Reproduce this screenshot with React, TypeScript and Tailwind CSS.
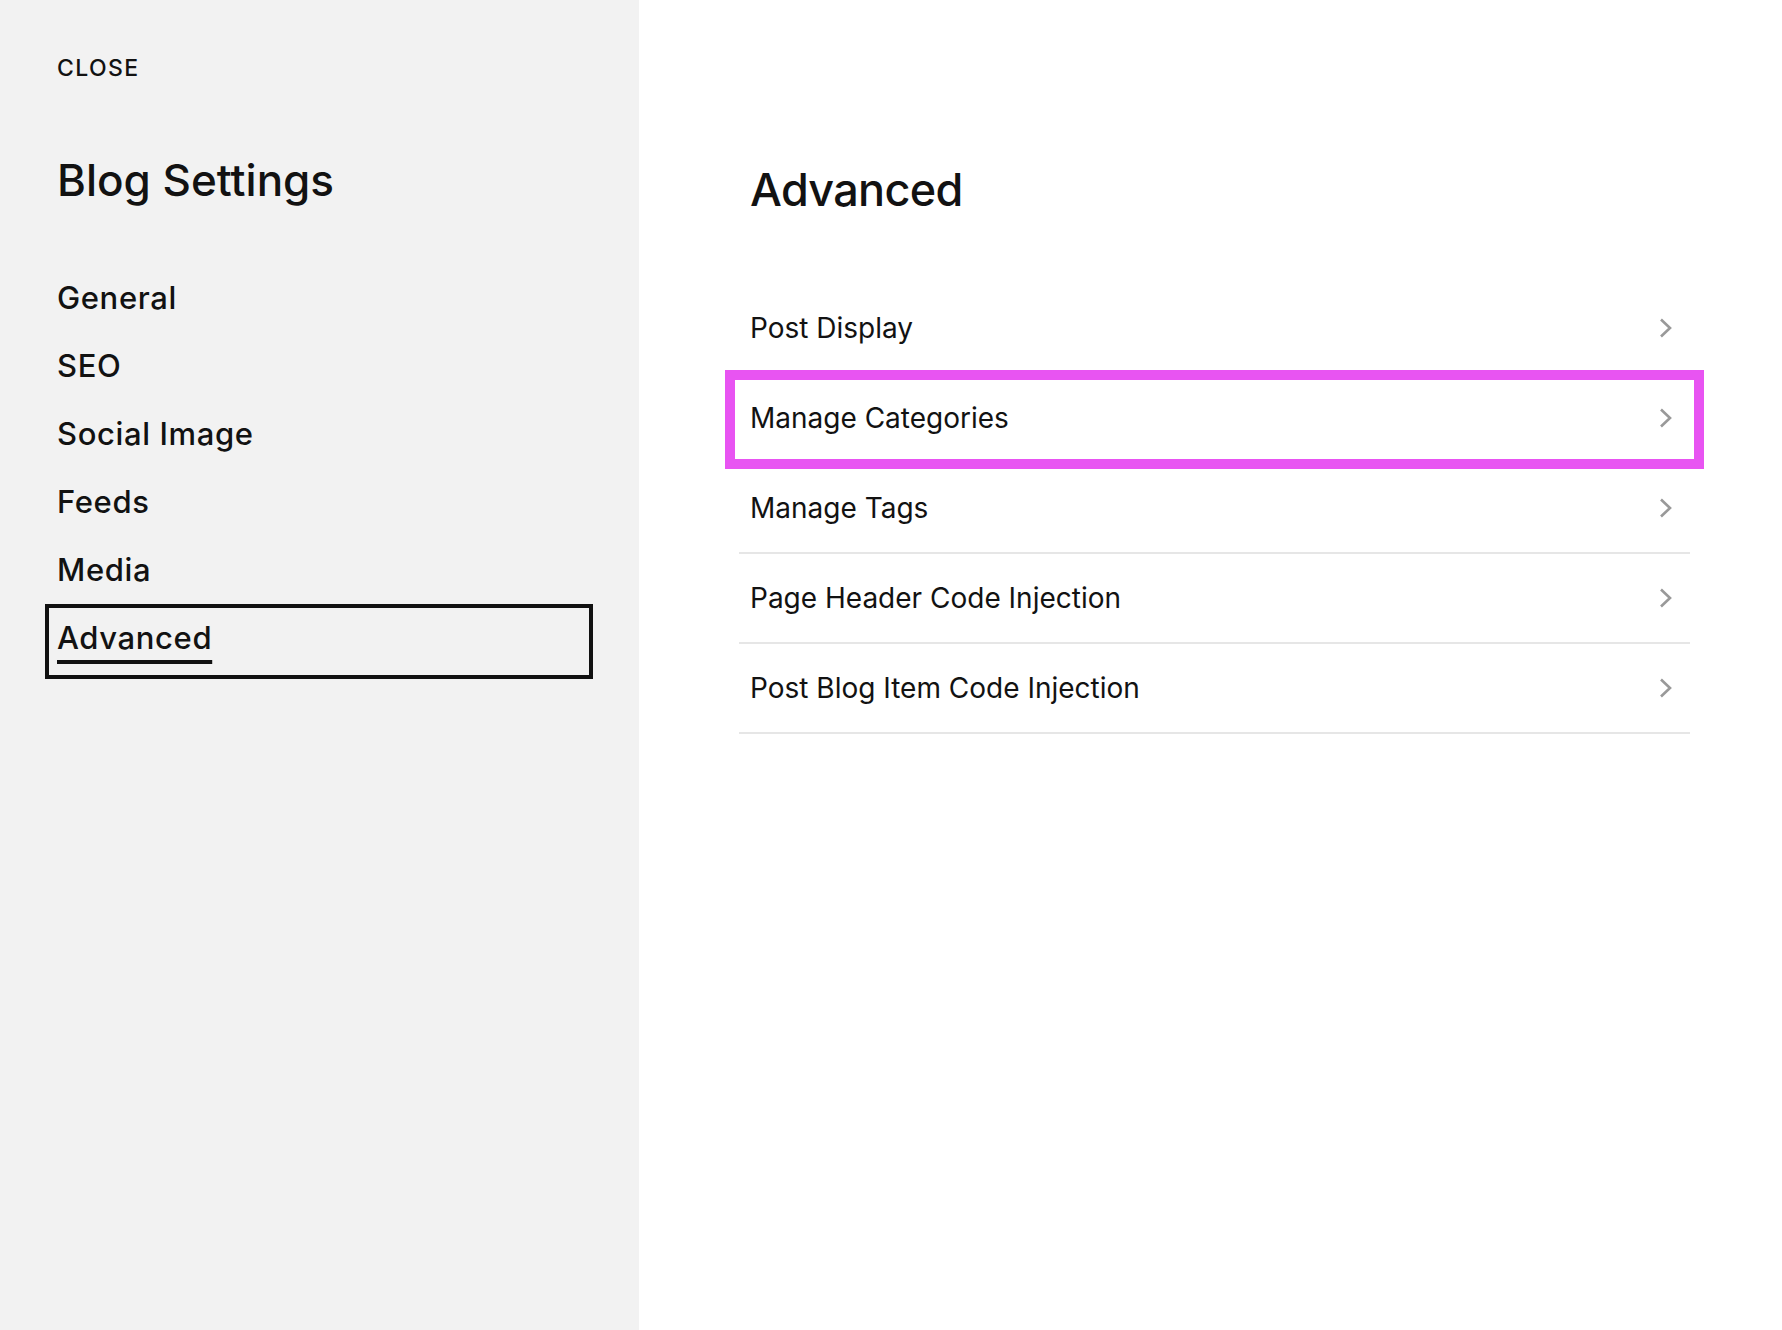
import { useState } from "react";

const navItems = ["General", "SEO", "Social Image", "Feeds", "Media", "Advanced"];

const rows = [
  "Post Display",
  "Manage Categories",
  "Manage Tags",
  "Page Header Code Injection",
  "Post Blog Item Code Injection",
];

const Chevron = () => (
  <svg width="15" height="20" viewBox="0 0 15 20" fill="none" className="shrink-0">
    <path d="M3 1.5 L12 10 L3 18.5" stroke="#999999" strokeWidth="2.6" />
  </svg>
);

export default function App() {
  const [active] = useState("Advanced");

  return (
    <div className="flex h-[1330px] w-full font-['Inter','Liberation_Sans',sans-serif] text-[#121212]">
      {/* Sidebar */}
      <aside className="w-[639px] shrink-0 bg-[#f2f2f2] pl-[57px] pr-[46px] pt-[57px]">
        <button className="block text-[23px] font-medium leading-none tracking-[0.06em]">CLOSE</button>
        <h1 className="mt-[78px] text-[44px] font-medium leading-none">Blog Settings</h1>
        <nav className="mt-[62px] flex flex-col">
          {navItems.map((item) => (
            <div key={item} className="relative h-[68px] text-[31px] font-medium leading-[68px] tracking-[0.02em]">
              {item === active ? (
                <>
                  <span className="underline decoration-[4px] underline-offset-[11px]">{item}</span>
                  <div className="pointer-events-none absolute -left-[12px] top-0 right-0 -bottom-[7px] border-4 border-[#111]" />
                </>
              ) : (
                item
              )}
            </div>
          ))}
        </nav>
      </aside>

      {/* Main */}
      <main className="flex-1 bg-white pl-[100px] pr-[92px] pt-[167px]">
        <h2 className="pl-[11px] text-[45px] font-medium leading-none tracking-[-0.015em]">Advanced</h2>
        <div className="mt-[72px] flex flex-col">
          {rows.map((row) => (
            <div
              key={row}
              className="relative flex h-[90px] items-center justify-between border-b-2 border-[#e6e6e6] pl-[11px] pr-[17px]"
            >
              <span className="text-[28px] leading-none">{row}</span>
              <Chevron />
              {row === "Manage Categories" && (
                <div className="pointer-events-none absolute -left-[14px] -right-[14px] -top-[4px] -bottom-[7px] border-[10px] border-[#e854f2]" />
              )}
            </div>
          ))}
        </div>
      </main>
    </div>
  );
}
